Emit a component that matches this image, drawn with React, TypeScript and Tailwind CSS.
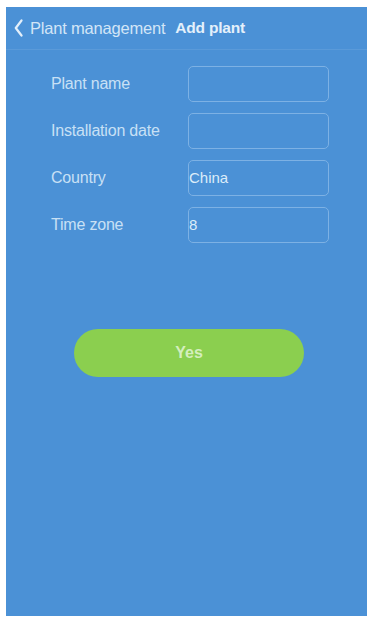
import React from "react";

export default function App() {
  const rows = [
    { label: "Plant name", value: "" },
    { label: "Installation date", value: "" },
    { label: "Country", value: "China" },
    { label: "Time zone", value: "8" },
  ];
  return (
    <div
      className="w-[373px] h-[618px] bg-white pt-[7px] pl-[6px]"
      style={{ fontFamily: '"Liberation Sans", Arial, sans-serif' }}
    >
      <div className="w-[361px] h-[609px] bg-[#4b91d6] flex flex-col">
        <div className="h-[43px] flex items-center border-b border-[#5a9ad9] pl-[8px]">
          <svg width="9" height="18" viewBox="0 0 9 18" className="mr-[7px]">
            <path d="M7.5 1.5 L1.8 9 L7.5 16.5" fill="none" stroke="#e3effa" strokeWidth="2.2" strokeLinecap="round" strokeLinejoin="round" />
          </svg>
          <span className="text-[16.5px] text-[#d2e5f7] tracking-[-0.2px]">Plant management</span>
          <span className="ml-[10px] text-[15.5px] font-bold text-[#e4f0fb] tracking-[-0.2px]">Add plant</span>
        </div>
        <div className="flex flex-col gap-[11px] pt-[16px]">
          {rows.map((r) => (
            <div key={r.label} className="flex items-center h-[36px]">
              <div className="w-[182px] pl-[45px] text-[16px] text-[#c8e0f5] whitespace-nowrap tracking-[-0.2px]">{r.label}</div>
              <div className="w-[141px] h-[36px] border border-[#7db1e4] rounded-[5px] flex items-center text-[15px] text-[#dcecf9]">
                {r.value}
              </div>
            </div>
          ))}
        </div>
        <div className="mt-[86px] ml-[68px] w-[230px] h-[48px] rounded-full bg-[#8bcf4f] flex items-center justify-center text-[16px] font-bold text-[#d4eebe]">
          Yes
        </div>
      </div>
    </div>
  );
}
